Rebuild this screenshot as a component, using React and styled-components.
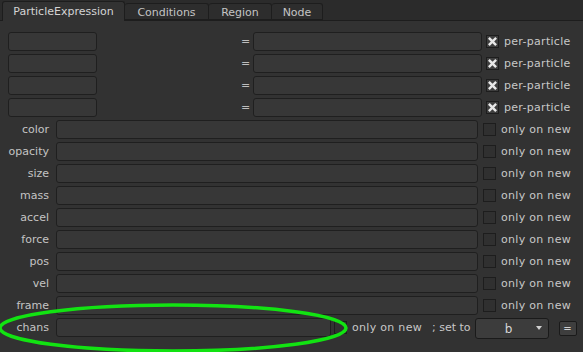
import React from "react";
import styled, { createGlobalStyle } from "styled-components";

const GlobalStyle = createGlobalStyle`
	html, body {
		margin: 0;
		padding: 0;
		background: #323232;
	}
	body {
		font-family: "DejaVu Sans", "Liberation Sans", sans-serif;
		font-size: 11px;
		color: #c8c8c8;
	}
`;

const Page = styled.div`
	position: relative;
	width: 583px;
	height: 352px;
	overflow: hidden;
	background: #323232;
`;

const TabBar = styled.div`
	display: flex;
	align-items: flex-end;
	height: 21px;
	padding-left: 2px;
	background: #2b2b2b;
	border-bottom: 1px solid #1d1d1d;
	box-sizing: border-box;
`;

const Tab = styled.div`
	display: flex;
	align-items: center;
	justify-content: center;
	box-sizing: border-box;
	width: ${p => p.$w}px;
	height: ${p => (p.$active ? "20px" : "17px")};
	margin-bottom: ${p => (p.$active ? "-1px" : "0")};
	background: ${p => (p.$active ? "#323232" : "#2d2d2d")};
	border: 1px solid #1d1d1d;
	border-bottom: ${p => (p.$active ? "none" : "1px solid #1d1d1d")};
	border-left: ${p => (p.$active ? "1px solid #1d1d1d" : "none")};
	border-radius: 3px 3px 0 0;
	color: ${p => (p.$active ? "#d4d4d4" : "#c4c4c4")};
	padding-top: ${p => (p.$active ? "0" : "1px")};
`;

const Body = styled.div`
	display: flex;
	flex-direction: column;
	gap: 3px;
	padding: 11px 0 0 8px;
`;

const Row = styled.div`
	display: flex;
	align-items: center;
	height: 19px;
`;

const Field = styled.div`
	box-sizing: border-box;
	width: ${p => p.$w}px;
	height: 19px;
	background: #373737;
	border: 1px solid #1f1f1f;
	border-radius: 3px;
	flex-shrink: 0;
`;

const Equals = styled.span`
	width: 12px;
	margin-left: 144px;
	color: #bdbdbd;
	text-align: left;
`;

const Label = styled.span`
	width: 41px;
	margin-right: 7px;
	text-align: right;
	color: #c4c4c4;
`;

const Check = styled.div`
	box-sizing: border-box;
	width: 13px;
	height: 13px;
	margin-left: ${p => p.$ml}px;
	margin-right: 5px;
	background: ${p => (p.$on ? "#3e3e3e" : "#303030")};
	border: 1px solid #1d1d1d;
	display: flex;
	align-items: center;
	justify-content: center;
	flex-shrink: 0;
`;

const Text = styled.span`
	color: #c8c8c8;
	white-space: nowrap;
	letter-spacing: 0.3px;
`;

const SetTo = styled.span`
	margin-left: 10px;
	margin-right: 4px;
	color: #c8c8c8;
	white-space: nowrap;
`;

const Dropdown = styled.div`
	position: relative;
	box-sizing: border-box;
	width: 74px;
	height: 21px;
	margin-top: 2px;
	background: #3c3c3c;
	border: 1px solid #1a1a1a;
	border-radius: 3px;
	display: flex;
	align-items: center;
	justify-content: center;
	color: #d6d6d6;
	font-size: 12px;
	padding-right: 6px;
`;

const Arrow = styled.span`
	position: absolute;
	right: 6px;
	top: 7px;
	width: 0;
	height: 0;
	border-left: 3px solid transparent;
	border-right: 3px solid transparent;
	border-top: 4px solid #d0d0d0;
`;

const SmallButton = styled.div`
	box-sizing: border-box;
	width: 18px;
	height: 15px;
	margin-left: 10px;
	margin-top: 2px;
	background: #3e3e3e;
	border: 1px solid #1a1a1a;
	border-radius: 2px;
	display: flex;
	align-items: center;
	justify-content: center;
	color: #d0d0d0;
	font-size: 10px;
`;

const Annotation = styled.svg`
	position: absolute;
	left: 0;
	top: 0;
	pointer-events: none;
`;

const Cross = () => (
	<svg width="11" height="11" viewBox="0 0 11 11">
		<path d="M2.7 2.7 L8.3 8.3 M8.3 2.7 L2.7 8.3" stroke="#e8e8e8" strokeWidth="2.4" strokeLinecap="square" />
	</svg>
);

const tabs = [
	["ParticleExpression", 123],
	["Conditions", 84],
	["Region", 63],
	["Node", 51],
];
const attrs = ["color", "opacity", "size", "mass", "accel", "force", "pos", "vel", "frame"];

const App = () => {
	return (
		<Page>
			<GlobalStyle />
			<TabBar>
				{tabs.map(([t, w], i) => (
					<Tab key={t} $w={w} $active={i === 0}>
						{t}
					</Tab>
				))}
			</TabBar>
			<Body>
				{[0, 1, 2, 3].map(i => (
					<Row key={"e" + i}>
						<Field $w={89} />
						<Equals>=</Equals>
						<Field $w={229} />
						<Check $on $ml={4}>
							<Cross />
						</Check>
						<Text>per-particle</Text>
					</Row>
				))}
				{attrs.map(a => (
					<Row key={a}>
						<Label>{a}</Label>
						<Field $w={422} />
						<Check $ml={5} />
						<Text>only on new</Text>
					</Row>
				))}
				<Row>
					<Label>chans</Label>
					<Field $w={275} />
					<Check $ml={3} />
					<Text>only on new</Text>
					<SetTo>; set to</SetTo>
					<Dropdown>
						b
						<Arrow />
					</Dropdown>
					<SmallButton>=</SmallButton>
				</Row>
			</Body>
			<Annotation width="583" height="352">
				<ellipse cx="173" cy="328" rx="173" ry="23" fill="none" stroke="#12e312" strokeWidth="3.5" />
			</Annotation>
		</Page>
	);
};

export default App;
